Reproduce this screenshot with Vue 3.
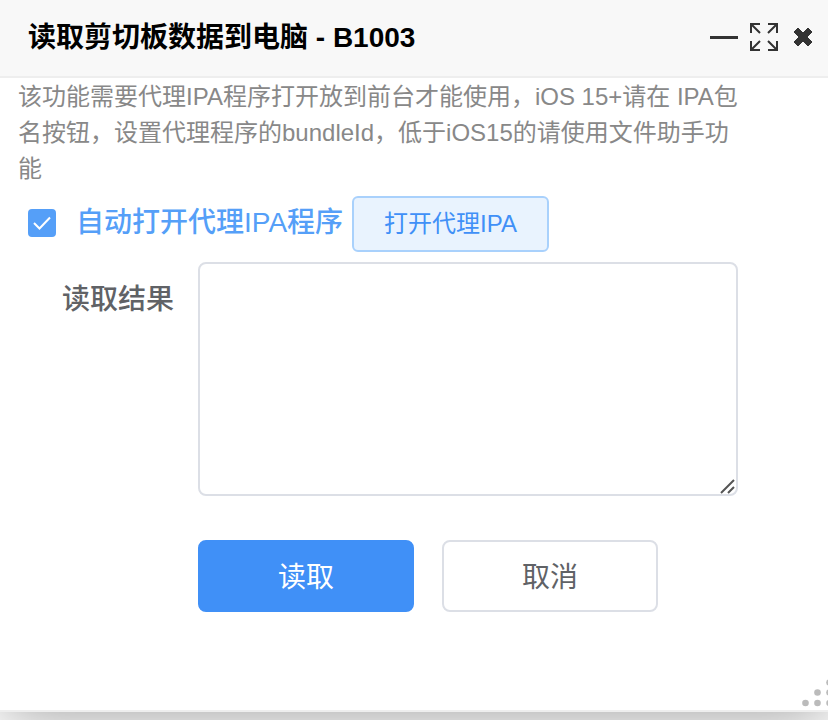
<script setup>
import { ref } from 'vue';

const autoOpen = ref(true);
const result = ref('');
</script>

<template>
  <div class="page">
    <section class="dialog">
      <header class="dialog__header">
        <h1 class="dialog__title">读取剪切板数据到电脑 - B1003</h1>
        <div class="dialog__tools">
          <button class="tool" type="button" aria-label="最小化">
            <svg width="28" height="28" viewBox="0 0 28 28">
              <path d="M0 14.500H28" stroke="#333" stroke-width="3" />
            </svg>
          </button>
          <button class="tool" type="button" aria-label="全屏">
            <svg width="28" height="28" viewBox="0 0 28 28">
              <path
                d="M1 10V1H10M1 1L10 10M18 1H27V10M27 1L18 10M1 18V27H10M1 27L10 18M18 27H27V18M27 27L18 18"
                fill="none"
                stroke="#333"
                stroke-width="2"
              />
            </svg>
          </button>
          <button class="tool" type="button" aria-label="关闭">
            <svg width="20" height="20" viewBox="0 0 20 20">
              <path
                d="M5 1L10 6L15 1L19 5L14 10L19 15L15 19L10 14L5 19L1 15L6 10L1 5Z"
                fill="#333"
                stroke="#333"
                stroke-width="1"
                stroke-linejoin="round"
              />
            </svg>
          </button>
        </div>
      </header>

      <form class="dialog__body" @submit.prevent="">
        <p class="hint">
          该功能需要代理IPA程序打开放到前台才能使用，iOS 15+请在 IPA包名按钮，设置代理程序的bundleId，低于iOS15的请使用文件助手功能
        </p>

        <div class="agent">
          <label class="agent__label">
            <input class="agent__checkbox" type="checkbox" v-model="autoOpen" />
            <svg class="agent__check" width="28" height="28" viewBox="0 0 28 28">
              <path d="M6 14L11.500 19.500L22 8.500" fill="none" stroke="#fff" stroke-width="2" />
            </svg>
            <span>自动打开代理IPA程序</span>
          </label>
          <button class="button button_plain" type="button">打开代理IPA</button>
        </div>

        <div class="field">
          <label class="field__label" for="result">读取结果</label>
          <div class="field__box">
            <textarea id="result" class="field__text" v-model="result"></textarea>
            <svg class="field__grip" width="16" height="16" viewBox="0 0 16 16">
              <path d="M1 15L14 2M8 15L14 9" stroke="#555" stroke-width="2" />
            </svg>
          </div>
        </div>

        <div class="actions">
          <button class="button button_primary" type="submit">读取</button>
          <button class="button" type="button">取消</button>
        </div>
      </form>

      <svg class="dialog__resize" width="26" height="28" viewBox="0 0 26 28">
        <g fill="#bbb">
          <circle cx="3.500" cy="24" r="3.300" />
          <circle cx="15.500" cy="24" r="3.300" />
          <circle cx="27.500" cy="24" r="3.300" />
          <circle cx="15.500" cy="13.500" r="3.300" />
          <circle cx="27.500" cy="13.500" r="3.300" />
          <circle cx="27.500" cy="3.500" r="3.300" />
        </g>
      </svg>
    </section>
  </div>
</template>

<style>
body {
  background-color: #fff;
}
</style>

<style scoped>
.page {
  box-sizing: border-box;
  min-height: 100vh;
  display: flex;
  flex-direction: column;
  padding-bottom: 8px;
  overflow: hidden;
}

.dialog {
  position: relative;
  display: flex;
  flex-direction: column;
  flex-grow: 1;
  border-bottom: 2px solid #eee;
  background-color: #fff;
  box-shadow: 2px 2px 60px rgba(0, 0, 0, 0.4);
  font-family: 'Liberation Sans', 'Noto Sans CJK SC', sans-serif;
}

.dialog__header {
  display: flex;
  align-items: center;
  justify-content: space-between;
  height: 76px;
  padding: 0 15px 0 28px;
  border-bottom: 2px solid #eee;
  background-color: #f8f8f8;
}

.dialog__title {
  margin: 0;
  font-size: 28px;
  line-height: 42px;
  font-weight: 700;
  color: #000;
}

.dialog__tools {
  display: flex;
  align-items: center;
  gap: 12px;
  padding-bottom: 2px;
}

.tool {
  display: flex;
  padding: 0;
  border: none;
  background: none;
  cursor: pointer;
}

.tool:last-child {
  margin-left: 3px;
}

.dialog__body {
  padding: 1px 90px 0 18px;
}

.hint {
  margin: 0;
  font-size: 24px;
  line-height: 36px;
  color: #888;
}

.agent {
  display: flex;
  align-items: center;
  gap: 9px;
  margin-top: 9px;
  padding-left: 10px;
}

.agent__label {
  position: relative;
  display: flex;
  align-items: center;
  gap: 20px;
  padding-bottom: 2px;
  font-size: 28px;
  line-height: 42px;
  font-weight: 500;
  color: #559ff8;
  white-space: nowrap;
  cursor: pointer;
}

.agent__checkbox {
  appearance: none;
  width: 28px;
  height: 28px;
  margin: 0;
  border: 2px solid #559ff8;
  border-radius: 4px;
}

.agent__checkbox:checked {
  background-color: #559ff8;
}

.agent__check {
  position: absolute;
  left: 0;
  visibility: hidden;
  pointer-events: none;
}

.agent__checkbox:checked + .agent__check {
  visibility: visible;
}

.field {
  display: flex;
  gap: 24px;
  margin-top: 10px;
}

.field__label {
  flex: 0 0 156px;
  font-size: 28px;
  line-height: 76px;
  font-weight: 500;
  text-align: right;
  color: #606266;
}

.field__box {
  position: relative;
  display: flex;
  flex-grow: 1;
}

.field__text {
  box-sizing: border-box;
  width: 100%;
  height: 234px;
  padding: 10px 30px;
  border: 2px solid #dcdfe6;
  border-radius: 8px;
  font-family: inherit;
  font-size: 28px;
  color: #606266;
  resize: none;
}

.field__grip {
  position: absolute;
  right: 2px;
  bottom: 2px;
  pointer-events: none;
}

.actions {
  display: flex;
  gap: 28px;
  margin-top: 44px;
  padding-left: 180px;
}

.button {
  box-sizing: border-box;
  width: 216px;
  height: 72px;
  padding: 0 0 2px;
  border: 2px solid #dcdfe6;
  border-radius: 8px;
  background-color: #fff;
  font-family: inherit;
  font-size: 28px;
  color: #606266;
  cursor: pointer;
}

.button_primary {
  border-color: #4090f7;
  background-color: #4090f7;
  color: #fff;
}

.button_plain {
  width: 197px;
  height: 56px;
  padding-bottom: 5px;
  border-color: #a9d1fc;
  border-radius: 6px;
  background-color: #e9f3fe;
  font-size: 24px;
  color: #4090f7;
}

.dialog__resize {
  position: absolute;
  right: 0;
  bottom: 3px;
}
</style>
